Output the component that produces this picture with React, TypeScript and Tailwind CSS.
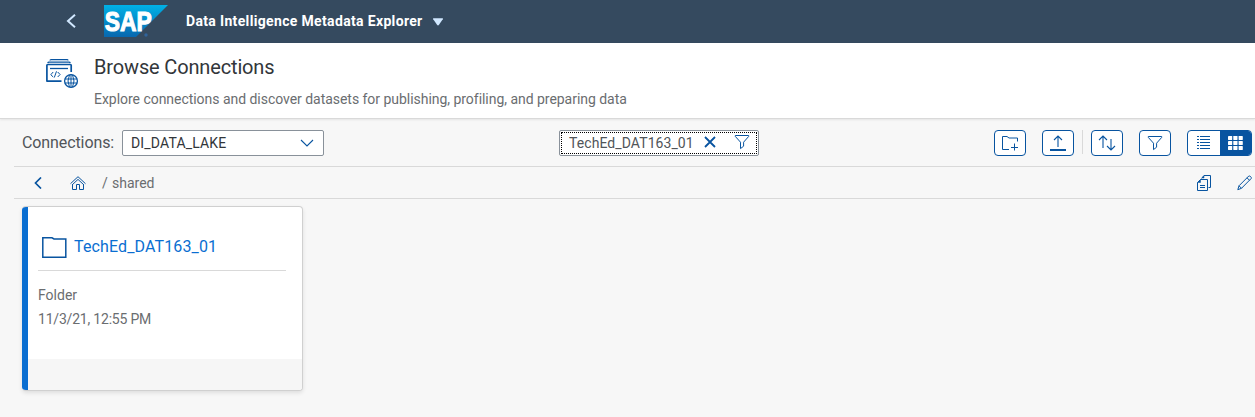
import type { ReactNode } from "react";

function SapLogo() {
  return (
    <svg width="65" height="33" viewBox="0 0 65 33" className="ml-[27px] shrink-0" aria-label="SAP">
      <defs>
        <linearGradient id="sap" x1="0" y1="0" x2="0" y2="1">
          <stop offset="0" stopColor="#00b1e6" />
          <stop offset="1" stopColor="#0867ae" />
        </linearGradient>
      </defs>
      <path d="M0 0H64L32 32H0Z" fill="url(#sap)" />
      <text x="0.8" y="26" textLength="47" lengthAdjust="spacingAndGlyphs" fontFamily="Liberation Sans, sans-serif" fontWeight="700" fontSize="27.5" fill="#fff" stroke="#fff" strokeWidth="1.1">SAP</text>
      <circle cx="42" cy="30" r="1.7" fill="#31649b" />
    </svg>
  );
}

function BrowseIcon() {
  return (
    <svg width="33" height="30" viewBox="0 0 33 30" fill="none" stroke="#0854a0" className="ml-[46px] mt-4 shrink-0">
      <path d="M4 1.5Q4 .7 5 .7H21Q22 .7 22 1.5M1.7 4Q2 3.2 3 3.2H23Q24 3.2 24.3 4" strokeWidth="1.2" />
      <path d="M15.5 22.2H1.2Q.9 22.2.9 21.7V6.3Q.9 5.5 1.7 5.5H24.4Q25.2 5.5 25.2 6.3V13" strokeWidth="1.7" />
      <path d="M4 9.5H22" strokeWidth="1.3" />
      <path d="M7.2 13L4.8 15.7L7.2 18M11.7 13L14.1 15.5L11.7 18M10.5 12.3L8.3 18.5" strokeWidth="1" />
      <circle cx="25" cy="22" r="6.4" strokeWidth="1.3" />
      <path d="M25 15.6V28.4M18.8 20H31.2M18.8 24H31.2M23.5 15.8Q20.5 22 23.5 28.2M26.5 15.8Q29.5 22 26.5 28.2" strokeWidth="1" />
    </svg>
  );
}

function FunnelIcon() {
  return (
    <svg width="16" height="16" viewBox="0 0 16 16" fill="none" stroke="#0854a0" strokeWidth="1">
      <path d="M1.3 1.5H14.7V2.4L9.6 8.2V12.2L6.5 14.6V8.2L1.3 2.4Z" />
    </svg>
  );
}

function ToolButton({ children, className = "" }: { children: ReactNode; className?: string }) {
  return (
    <button className={"flex h-[26px] w-8 shrink-0 items-center justify-center rounded-[4px] border border-[#0854a0] bg-white " + className}>
      {children}
    </button>
  );
}

function ShellBar() {
  return (
    <header className="flex h-[43px] bg-[#354a5f] pl-[66px] text-white">
      <svg width="11" height="14" viewBox="0 0 11 14" fill="none" stroke="#d1e8ff" strokeWidth="2" className="mt-[14px] shrink-0">
        <path d="M9 .8L2 7L9 13.2" />
      </svg>
      <div className="mt-[5px] shrink-0"><SapLogo /></div>
      <span className="ml-[17px] mt-[11px] w-[237px] whitespace-nowrap font-bold text-[14px] leading-5 tracking-[0.34px]">Data Intelligence Metadata Explorer</span>
      <svg width="12" height="8" viewBox="0 0 12 8" className="ml-[9px] mt-[18px]">
        <path d="M1.5.3H10.5Q11.3.3 10.8 1.3L7 6.8Q6 8 5 6.8L1.2 1.3Q.7.3 1.5.3Z" fill="#d1e8ff" />
      </svg>
    </header>
  );
}

function TitleBar() {
  return (
    <section className="flex h-[76px] border-b border-[#d9d9d9] bg-white shadow-[0_1px_2px_rgba(0,0,0,0.08)]">
      <BrowseIcon />
      <div className="ml-[15px] whitespace-nowrap">
        <h1 className="mt-3 text-[20px] leading-6 tracking-[-0.15px] text-[#32363a]">Browse Connections</h1>
        <p className="mt-[10px] text-[14px] leading-5 tracking-[-0.035px] text-[#6a6d70]">Explore connections and discover datasets for publishing, profiling, and preparing data</p>
      </div>
    </section>
  );
}

function Toolbar() {
  return (
    <div className="ml-[14px] flex h-12 border-b border-[#d9d9d9] pl-2 pt-[11px]">
      <label className="mt-px w-[100px] shrink-0 whitespace-nowrap text-[16px] leading-6 tracking-[-0.1px] text-[#515559]">Connections:</label>
      <div className="flex h-[26px] w-[202px] shrink-0 items-center justify-between rounded-[2px] border border-[#89919a] bg-white pl-2 pr-[9px] text-[14px] tracking-[0.17px] text-[#32363a]">
        <span>DI_DATA_LAKE</span>
        <svg width="14" height="8" viewBox="0 0 14 8" fill="none" stroke="#0854a0" strokeWidth="1.1"><path d="M1 1L7 7L13 1" /></svg>
      </div>
      <div className="ml-[235px] h-[26px] w-[200px] shrink-0 rounded-[2px] border border-[#89919a] bg-white p-px">
        <div className="flex h-full items-center border border-dotted border-black pl-[7px]">
          <span className="w-[135px] text-[14px] leading-5 tracking-[0.08px] text-[#515559]">TechEd_DAT163_01</span>
          <svg width="12" height="12" viewBox="0 0 12 12" stroke="#0854a0" strokeWidth="1.8" className="-mt-[3px]"><path d="M1 1L11 11M11 1L1 11" /></svg>
          <span className="-mt-[3px] ml-[18px]"><FunnelIcon /></span>
        </div>
      </div>
      <div className="ml-[235px] flex">
        <ToolButton>
          <svg width="18" height="16" viewBox="0 0 18 16" fill="none" stroke="#0854a0" strokeWidth="1">
            <path d="M8 14.5H1.5V1.5H6L8 3H16.5V6.5M13.5 8.5V15.5M10 12.5H17" />
          </svg>
        </ToolButton>
        <ToolButton className="ml-4">
          <svg width="16" height="16" viewBox="0 0 16 16" fill="none" stroke="#0854a0">
            <path d="M8 1V12M4 5L8 1L12 5" strokeWidth="1.1" /><path d="M0 15H16" strokeWidth="2" />
          </svg>
        </ToolButton>
        <div className="ml-2 h-6 w-px bg-[#d9d9d9]" />
        <ToolButton className="ml-2">
          <svg width="18" height="16" viewBox="0 0 18 16" fill="none" stroke="#0854a0" strokeWidth="1.1">
            <path d="M5 1V13M1 5L5 1L9 5M13 4V15M9 11L13 15L17 11" />
          </svg>
        </ToolButton>
        <ToolButton className="ml-4"><FunnelIcon /></ToolButton>
        <div className="ml-4 flex h-[26px] w-[65px] overflow-hidden rounded-[4px] border border-[#0854a0] bg-white">
          <div className="flex w-8 items-center justify-center">
            <svg width="14" height="14" viewBox="0 0 14 14" stroke="#0854a0" shapeRendering="crispEdges">
              <path d="M3 .5H13M3 3.5H13M3 6.5H13M3 9.5H13M3 12.5H13M0 .5H2M0 3.5H2M0 6.5H2M0 9.5H2M0 12.5H2" />
            </svg>
          </div>
          <div className="flex flex-1 items-center justify-center bg-[#0854a0]">
            <svg width="15" height="14" viewBox="0 0 15 14" fill="#fff">
              {[0, 5, 10].map((y) => [0, 5.3, 10.6].map((x) => <rect key={`${x}-${y}`} x={x} y={y} width="4.2" height="4" rx=".4" />))}
            </svg>
          </div>
        </div>
      </div>
    </div>
  );
}

function Breadcrumb() {
  return (
    <nav className="ml-[14px] flex h-8 border-b border-[#d9d9d9] pl-5">
      <svg width="8" height="12" viewBox="0 0 8 12" fill="none" stroke="#0854a0" strokeWidth="1.7" className="mt-[10px]"><path d="M7 .5L1.5 6L7 11.5" /></svg>
      <svg width="16" height="15" viewBox="0 0 16 15" fill="none" stroke="#0854a0" strokeWidth="1" className="ml-7 mt-[9px]">
        <path d="M.5 7.7L8 .7L15.5 7.7M2 9L8 3.4L14 9M2.5 8.8V13.5H6.5V8.5H9.5V13.5H13.5V8.8" />
      </svg>
      <span className="ml-4 mt-[6px] w-[10px] text-[14px] leading-5 text-[#6a6d70]">/</span>
      <span className="mt-[6px] text-[14px] leading-5 text-[#6a6d70]">shared</span>
      <svg width="15" height="17" viewBox="0 0 15 17" fill="none" stroke="#0854a0" strokeWidth="1" className="ml-auto mt-2">
        <path d="M4.5 3.5L7 .5H13.5V12.5H11.5M.5 7.5L3.5 4.5H10.5V15.5H.5ZM3 10.5H8M3 12.5H8" />
        <path d="M.5 7.5L3.5 4.5V7.5ZM5 3L7 .7V3Z" fill="#0854a0" strokeWidth=".5" />
      </svg>
      <svg width="15" height="16" viewBox="0 0 15 16" fill="none" stroke="#0854a0" strokeWidth="1" className="ml-[25px] mr-[3px] mt-2">
        <path d="M.8 14.7L2 10.8L11.8 1Q12.3.6 12.8 1L14.2 2.4Q14.7 3 14.2 3.5L4.5 13.3ZM10 2.8L12.6 5.4M2 10.8L4.5 13.3" />
      </svg>
    </nav>
  );
}

function FolderCard() {
  return (
    <article className="ml-[22px] mt-[7px] flex h-[185px] w-[281px] overflow-hidden rounded-[4px] border-b border-r border-t border-[#d0d0d0] bg-white shadow-[0_2px_4px_rgba(0,0,0,0.1)]">
      <div className="w-[6px] shrink-0 bg-[#0a6ed1]" />
      <div className="flex flex-1 flex-col">
        <div className="ml-[10px] mr-4 flex h-16 border-b border-[#d9d9d9]">
          <svg width="25" height="22" viewBox="0 0 25 22" fill="none" stroke="#0854a0" strokeWidth="1.5" className="ml-1 mt-[30px]">
            <path d="M.8 20.3V.8H10L12 2H23.8V20.3Z" />
          </svg>
          <a className="ml-[7px] mt-[28px] text-[16px] leading-6 tracking-[0.13px] text-[#0a6ed1]">TechEd_DAT163_01</a>
        </div>
        <p className="ml-[10px] mt-[14px] text-[14px] leading-5 text-[#6a6d70]">Folder</p>
        <p className="ml-[10px] mt-1 text-[14px] leading-5 tracking-[-0.2px] text-[#6a6d70]">11/3/21, 12:55 PM</p>
        <div className="mt-auto h-[31px] bg-[#f6f6f6]" />
      </div>
    </article>
  );
}

export default function App() {
  return (
    <main className="h-[417px] overflow-hidden bg-[#f7f7f7] font-['Roboto','Noto_Sans',sans-serif]">
      <ShellBar />
      <TitleBar />
      <Toolbar />
      <Breadcrumb />
      <FolderCard />
    </main>
  );
}
